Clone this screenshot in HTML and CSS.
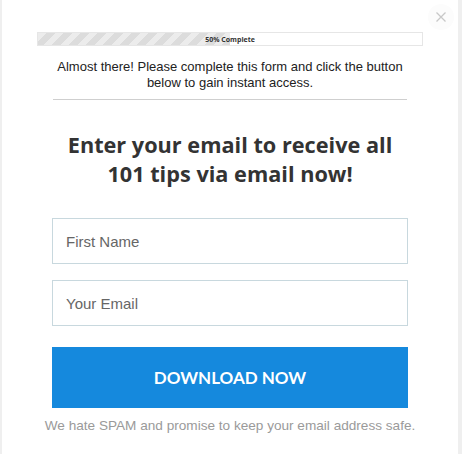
FILE: index.html
```html
<!DOCTYPE html>
<html>
<head>
<meta charset="utf-8">
<link rel="stylesheet" href="styles.css">
</head>
<body>
<div class="modal">
  <button class="close" aria-label="Close">
    <svg width="10" height="10" viewBox="0 0 10 10"><path d="M0.5 0.5 L9.5 9.5 M9.5 0.5 L0.5 9.5" stroke="#c8c8c8" stroke-width="1.3" fill="none"/></svg>
  </button>
  <div class="progress">
    <div class="progress-fill" style="width:50%"></div>
    <span class="progress-label">50% Complete</span>
  </div>
  <p class="intro">Almost there! Please complete this form and click the button below to gain instant access.</p>
  <hr class="divider">
  <h1 class="title">Enter your email to receive all<br>101 tips via email now!</h1>
  <form class="form">
    <input class="field" type="text" placeholder="First Name">
    <input class="field" type="email" placeholder="Your Email">
    <button class="submit" type="button">DOWNLOAD NOW</button>
  </form>
  <p class="note">We hate SPAM and promise to keep your email address safe.</p>
</div>
</body>
</html>
```

FILE: styles.css
```css
html, body {
  margin: 0;
  padding: 0;
  background: #efefef;
}
.modal {
  position: relative;
  margin-left: 2px;
  width: 456px;
  height: 454px;
  background: #fff;
  box-sizing: border-box;
  padding-top: 32px;
  display: flex;
  flex-direction: column;
  align-items: center;
  font-family: "Liberation Sans", Arial, sans-serif;
}
.close {
  position: absolute;
  top: 4px;
  right: 4px;
  width: 26px;
  height: 26px;
  border-radius: 50%;
  border: none;
  background: #fcfcfc;
  display: flex;
  align-items: center;
  justify-content: center;
  padding: 0;
}
.progress {
  position: relative;
  width: 386px;
  height: 14px;
  box-sizing: border-box;
  border: 1px solid #e6e6e6;
  background: #fff;
}
.progress-fill {
  height: 100%;
  background: repeating-linear-gradient(-45deg, #dcdcdc 0 6px, #ececec 6px 12px);
}
.progress-label {
  position: absolute;
  inset: 0;
  display: flex;
  align-items: center;
  justify-content: center;
  font-family: "Open Sans", sans-serif;
  font-weight: 700;
  font-size: 7px;
  color: #333;
}
.intro {
  margin: 13px 0 0;
  width: 380px;
  text-align: center;
  font-size: 13px;
  line-height: 16px;
  color: #222;
}
.divider {
  margin: 8px 0 0;
  width: 354px;
  border: 0;
  border-top: 1px solid #cfcfcf;
  height: 0;
}
.title {
  margin: 30px 0 0;
  text-align: center;
  font-family: "Open Sans", sans-serif;
  font-weight: 700;
  font-size: 21.7px;
  line-height: 29px;
  color: #333;
}
.form {
  margin-top: 30px;
  width: 356px;
  display: flex;
  flex-direction: column;
  gap: 16px;
}
.field {
  height: 46px;
  box-sizing: border-box;
  border: 1px solid #c8d8de;
  padding: 0 13px;
  font-family: "Liberation Sans", Arial, sans-serif;
  font-size: 15px;
  color: #555;
  outline: none;
}
.field::placeholder {
  color: #666;
}
.submit {
  margin-top: 5px;
  height: 61px;
  border: none;
  background: #1589dd;
  color: #fff;
  font-family: Lato, sans-serif;
  font-weight: 700;
  font-size: 17px;
  letter-spacing: 0;
}
.note {
  margin: 9px 0 0;
  text-align: center;
  font-size: 13.6px;
  line-height: 18px;
  color: #9a9a9a;
}
```
